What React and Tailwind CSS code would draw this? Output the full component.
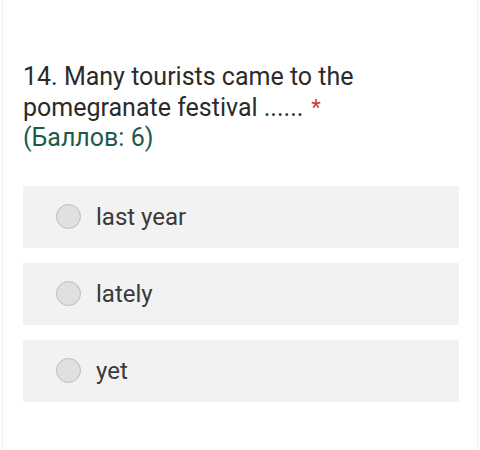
export default function App() {
  const options = ["last year", "lately", "yet"];
  return (
    <div className="w-[480px] h-[450px] bg-white" style={{ fontFamily: "Roboto, 'Noto Sans', sans-serif" }}>
      <div className="h-full mx-[2px] border-x border-[#eeeeee] pt-[62px] pl-[20px] pr-[18px]">
        <div className="text-[25px] leading-[30.5px] text-[#2b2b2b]">
          <p>
            14. Many tourists came to the pomegranate festival ......
            <span className="text-[#c5432e] ml-[8px] text-[22px] align-top">*</span>
          </p>
          <p className="text-[#1e5a4c]">(Баллов: 6)</p>
        </div>
        <div className="mt-[32px] flex flex-col gap-[15px]">
          {options.map((o) => (
            <div key={o} className="h-[62px] bg-[#f2f2f2] flex items-center pl-[33px]">
              <div className="w-[25px] h-[25px] rounded-full bg-[#e0e0e0] border-[1.5px] border-[#bdbdbd]" />
              <span className="ml-[15px] text-[24px] text-[#3a3a3a]">{o}</span>
            </div>
          ))}
        </div>
      </div>
    </div>
  );
}
